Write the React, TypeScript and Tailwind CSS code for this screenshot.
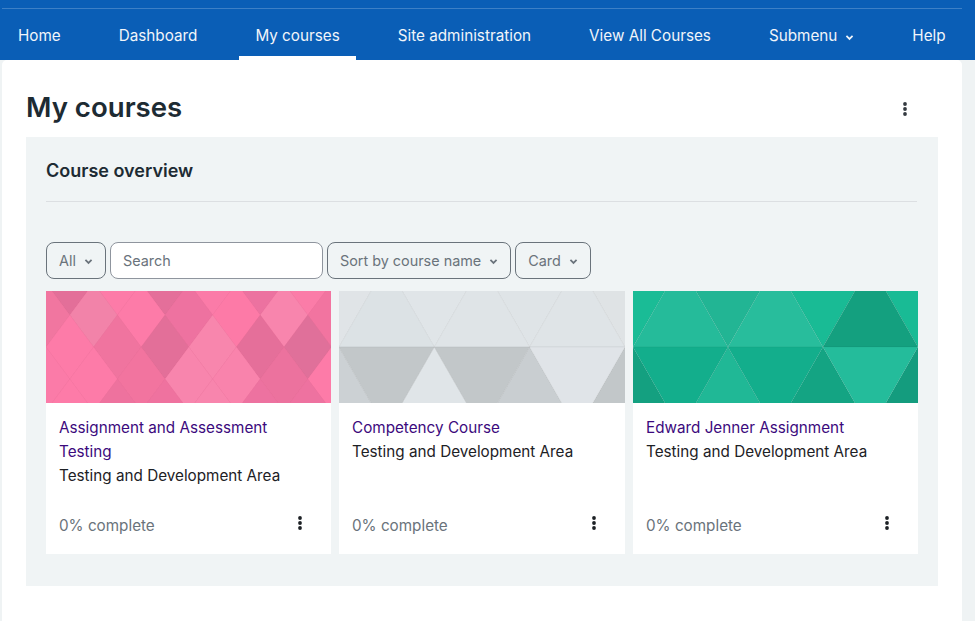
import { ReactNode } from "react";

const navItems = ["Home", "Dashboard", "My courses", "Site administration", "View All Courses", "Submenu", "Help"];

const pinkRows: { cy: number; odd: boolean; colors: string[] }[] = [
  { cy: -8, odd: true, colors: ["#e36f99", "#fd7ba8", "#e46f9a", "#fb7ba8", "#ec72a0", "#fb7ca8"] },
  { cy: 24, odd: false, colors: ["#f176a0", "#f283a9", "#fd7ba8", "#ee72a0", "#fd7aa7", "#f885ad", "#f274a0"] },
  { cy: 56, odd: true, colors: ["#fd7ba8", "#f0749f", "#e36f99", "#f886ad", "#e56f9a", "#e0709a"] },
  { cy: 88, odd: false, colors: ["#fb7ba8", "#fd7ba8", "#f2749f", "#f885ad", "#f983ac", "#ec729e", "#fd7ba8"] },
  { cy: 120, odd: true, colors: ["#fd7ba8", "#ee729e", "#ef729f", "#f885ad", "#ed72a0", "#ee72a0"] },
];

function PinkPattern() {
  return (
    <svg viewBox="0 0 285 112" className="block w-full h-[112px]" preserveAspectRatio="none">
      <rect width="285" height="112" fill="#fd7ba8" />
      {pinkRows.map((row) =>
        row.colors.map((c, i) => {
          const cx = 47.6 * i + (row.odd ? 23.8 : 0);
          return (
            <polygon
              key={`${row.cy}-${i}`}
              points={`${cx},${row.cy - 32} ${cx + 23.8},${row.cy} ${cx},${row.cy + 32} ${cx - 23.8},${row.cy}`}
              fill={c}
              stroke="#000"
              strokeOpacity="0.02"
            />
          );
        })
      )}
    </svg>
  );
}

type TriColors = { upUp: string[]; upDown: string[]; lowDown: string[]; lowUp: string[]; line: string };

function TrianglePattern({ colors }: { colors: TriColors }) {
  const s = 95.3;
  const mid = 56;
  const top = -27;
  const bot = 139;
  const line = { stroke: colors.line, strokeOpacity: 0.04 };
  return (
    <svg viewBox="0 0 286 112" className="block w-full h-[112px]" preserveAspectRatio="none">
      {colors.upDown.map((c, i) => (
        <polygon key={`ud${i}`} points={`${s * i - s / 2},${top} ${s * i + s / 2},${top} ${s * i},${mid}`} fill={c} {...line} />
      ))}
      {colors.upUp.map((c, i) => (
        <polygon key={`uu${i}`} points={`${s * i},${mid} ${s * (i + 1)},${mid} ${s * i + s / 2},${top}`} fill={c} {...line} />
      ))}
      {colors.lowUp.map((c, i) => (
        <polygon key={`lu${i}`} points={`${s * i - s / 2},${bot} ${s * i + s / 2},${bot} ${s * i},${mid}`} fill={c} {...line} />
      ))}
      {colors.lowDown.map((c, i) => (
        <polygon key={`ld${i}`} points={`${s * i},${mid} ${s * (i + 1)},${mid} ${s * i + s / 2},${bot}`} fill={c} {...line} />
      ))}
    </svg>
  );
}

const grey: TriColors = {
  upUp: ["#dce2e5", "#dfe4e7", "#dfe4e7"],
  upDown: ["#e0e4e7", "#e0e5e8", "#dfe4e7", "#dfe3e5"],
  lowDown: ["#c2c7c9", "#c2c7c9", "#e0e4e8"],
  lowUp: ["#ccd1d4", "#e0e5e8", "#c9ced1", "#c2c7c9"],
  line: "#000",
};

const green: TriColors = {
  upUp: ["#25bb9a", "#28bd9c", "#14a07f"],
  upDown: ["#1abc96", "#22b594", "#19bb95", "#19bb95"],
  lowDown: ["#13ae8c", "#13ae8c", "#24bc9b"],
  lowUp: ["#14a080", "#20b896", "#14a483", "#149c7e"],
  line: "#000",
};

function Chevron({ className }: { className: string }) {
  return (
    <svg viewBox="0 0 10 10" className={className} fill="none" stroke="currentColor" strokeWidth="1.9">
      <path d="M1.6 3.2 5 6.6l3.4-3.4" />
    </svg>
  );
}

function Kebab() {
  return (
    <svg viewBox="0 0 4 14" className="block w-[4px] h-[14px]" fill="currentColor">
      <circle cx="2" cy="2" r="1.9" />
      <circle cx="2" cy="7" r="1.9" />
      <circle cx="2" cy="12" r="1.9" />
    </svg>
  );
}

function FilterButton({ label }: { label: string }) {
  return (
    <div className="flex items-center gap-[8px] h-[37px] px-[12px] border border-[#6a737b] rounded-lg text-[#6a737b] text-[14.4px] whitespace-nowrap">
      {label}
      <Chevron className="w-[9px] h-[9px] mt-[1px]" />
    </div>
  );
}

function CourseCard({ title, art, width }: { title: string; art: ReactNode; width: string }) {
  return (
    <div className={`${width} h-[263px] bg-white flex flex-col`}>
      {art}
      <div className="flex-1 flex flex-col pl-[13px] pr-[29px] pt-[13px] pb-[16px] text-[15.25px] leading-[24px]">
        <div className="text-[#3c0a7d]">{title}</div>
        <div className="text-[#1d2125]">Testing and Development Area</div>
        <div className="mt-auto flex items-start justify-between text-[#6a737b]">
          0% complete
          <span className="text-[#1d2125] mt-[2px]">
            <Kebab />
          </span>
        </div>
      </div>
    </div>
  );
}

export default function App() {
  return (
    <div className="h-[621px] overflow-hidden bg-[#eff3f4] font-[Inter,sans-serif]">
      <nav className="h-[60px] bg-[#0a5eb6] pt-[8px] pl-[2px]">
        <div className="w-[960px] border-t border-[#3d80c6] flex gap-[26px] text-[15.25px] text-[#f1f5fa] whitespace-nowrap">
          {navItems.map((item) => (
            <div
              key={item}
              className={`h-[51px] px-[16px] pt-[8px] flex items-center gap-[8px] border-b-[4px] ${
                item === "My courses" ? "border-white" : "border-transparent"
              }`}
            >
              {item}
              {item === "Submenu" && <Chevron className="w-[9px] h-[9px] mt-[1px]" />}
            </div>
          ))}
        </div>
      </nav>
      <main className="ml-[2px] w-[960px] h-[561px] bg-white rounded-t-[5px] pl-[24px] pr-[24px]">
        <div className="h-[77px] flex items-start justify-between pt-[30px] pr-[31px]">
          <h1 className="text-[27.6px] leading-[34px] font-semibold text-[#1d2b33]">My courses</h1>
          <span className="text-[#343a40] mt-[12px]">
            <Kebab />
          </span>
        </div>
        <section className="h-[449px] bg-[#f0f4f5] px-[20px] pt-[22px]">
          <h2 className="text-[18px] leading-[24px] font-semibold text-[#1d2b33] pb-[18px] border-b border-[#dcdfe2] mr-[1px]">
            Course overview
          </h2>
          <div className="flex gap-[4px] mt-[40px] h-[37px]">
            <FilterButton label="All" />
            <div className="w-[213px] h-[37px] bg-white border border-[#8f959e] rounded-lg px-[12px] flex items-center text-[14.4px] text-[#6a737b]">
              Search
            </div>
            <FilterButton label="Sort by course name" />
            <FilterButton label="Card" />
          </div>
          <div className="flex gap-[8px] mt-[12px]">
            <CourseCard width="w-[285px]" title="Assignment and Assessment Testing" art={<PinkPattern />} />
            <CourseCard width="w-[286px]" title="Competency Course" art={<TrianglePattern colors={grey} />} />
            <CourseCard width="w-[285px]" title="Edward Jenner Assignment" art={<TrianglePattern colors={green} />} />
          </div>
        </section>
      </main>
    </div>
  );
}
